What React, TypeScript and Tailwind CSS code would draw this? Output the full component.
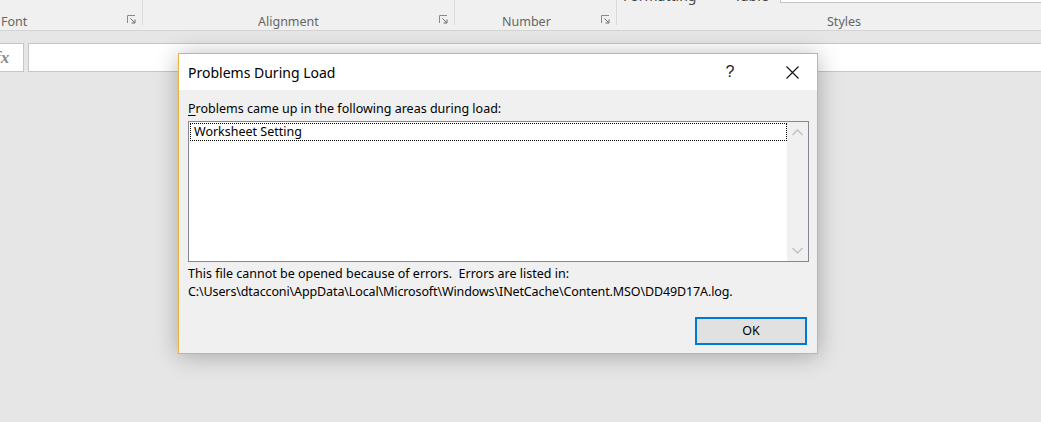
import React from "react";

function Launcher() {
  return (
    <svg width="9" height="9" viewBox="0 0 9 9" className="block">
      <path d="M0.5 8 V0.5 H8" stroke="#8a8a8a" strokeWidth="1" fill="none" />
      <path d="M3.5 3.5 L7.5 7.5" stroke="#6a6a6a" strokeWidth="1" fill="none" />
      <path d="M4.5 8 H8 V4.5" stroke="#6a6a6a" strokeWidth="1" fill="none" />
    </svg>
  );
}

function Group({
  label,
  width,
  launcher,
  labelClass,
}: {
  label: string;
  width: string;
  launcher?: boolean;
  labelClass?: string;
}) {
  return (
    <div className={`relative h-full ${width} flex shrink-0`}>
      <div className="relative flex-1 h-full">
        <div className={`absolute bottom-[2px] text-[12.5px] text-[#666] leading-none ${labelClass ?? ""}`}>{label}</div>
        {launcher && (
          <div className="absolute right-[6px] bottom-[6px]">
            <Launcher />
          </div>
        )}
      </div>
      <div className="w-px h-[25px] bg-[#dadada]" />
    </div>
  );
}

export default function App() {
  return (
    <div
      className="relative w-[1041px] h-[422px] overflow-hidden bg-[#e6e6e6] text-black"
      style={{ fontFamily: '"Noto Sans", "Open Sans", sans-serif' }}
    >
      {/* Ribbon */}
      <div className="h-[31px] bg-[#f0f0f0] border-b border-[#d4d4d4] flex">
        <Group label="Font" width="w-[143px]" launcher labelClass="left-[1px]" />
        <Group label="Alignment" width="w-[312px]" launcher labelClass="left-[115px]" />
        <Group label="Number" width="w-[162px]" launcher labelClass="left-[47px]" />
        <div className="relative flex-1 h-full">
          <div className="absolute left-[6px] top-[-11px] text-[14px] text-[#444] leading-none">Formatting</div>
          <div className="absolute left-[117px] top-[-11px] text-[14px] text-[#444] leading-none">Table</div>
          <div className="absolute left-[163px] top-0 right-0 h-[3px] border-b border-l border-[#c6c6c6] bg-white" />
          <div className="absolute bottom-[2px] left-[210px] text-[12.5px] text-[#666] leading-none">Styles</div>
        </div>
      </div>

      {/* Formula bar */}
      <div className="mt-[12px] flex h-[29px]">
        <div className="w-[24px] h-full bg-white border border-l-0 border-[#c6c6c6] flex items-center overflow-hidden">
          <span
            className="ml-[-5px] text-[17px] italic font-bold text-[#8a8a8a] leading-none"
            style={{ fontFamily: '"Liberation Serif", serif' }}
          >
            fx
          </span>
        </div>
        <div className="ml-[4px] flex-1 h-full bg-white border border-r-0 border-[#c6c6c6]" />
      </div>

      {/* Dialog */}
      <div className="absolute left-[178px] top-[53px] w-[640px] h-[301px] border border-[#e8b43e] bg-[#f0f0f0] shadow-[0_2px_22px_rgba(0,0,0,0.28)] flex flex-col">
        <div className="h-[36px] bg-white flex items-center shrink-0">
          <div className="pl-[9px] text-[14px] leading-none pt-[1px]">Problems During Load</div>
          <div className="flex-1" />
          <div
            className="w-[46px] text-center text-[16px] text-[#222] leading-none mr-[16px]"
            style={{ fontFamily: '"Liberation Sans", sans-serif' }}
          >
            ?
          </div>
          <div className="w-[46px] h-full flex items-center justify-center mr-[2px]">
            <svg width="13" height="13" viewBox="0 0 13 13">
              <path d="M0.5 0.5 L12.5 12.5 M12.5 0.5 L0.5 12.5" stroke="#111" strokeWidth="1.1" />
            </svg>
          </div>
        </div>
        <div className="flex-1 px-[9px] pt-[10px] text-[12.5px]">
          <div className="leading-[17px] h-[17px]">
            <span className="underline underline-offset-2">P</span>roblems came up in the following areas during load:
          </div>
          <div className="mt-[4px] h-[141px] w-[621px] bg-white border border-[#828790] flex">
            <div className="flex-1 pl-[1px] pt-[1px]">
              <div className="h-[18px] border border-dotted border-black pl-[3px] leading-[16px]">Worksheet Setting</div>
            </div>
            <div className="w-[21px] bg-[#f0f0f0] flex flex-col items-center justify-between py-[7px]">
              <svg width="11" height="7" viewBox="0 0 11 7">
                <path d="M0.5 6 L5.5 1 L10.5 6" stroke="#c2c2c2" strokeWidth="1.5" fill="none" />
              </svg>
              <svg width="11" height="7" viewBox="0 0 11 7">
                <path d="M0.5 1 L5.5 6 L10.5 1" stroke="#c2c2c2" strokeWidth="1.5" fill="none" />
              </svg>
            </div>
          </div>
          <div className="mt-[3px] leading-[18px]">
            <div>This file cannot be opened because of errors.&nbsp; Errors are listed in:</div>
            <div className="tracking-[-0.12px]">
              C:\Users\dtacconi\AppData\Local\Microsoft\Windows\INetCache\Content.MSO\DD49D17A.log.
            </div>
          </div>
          <div className="flex justify-end mt-[16px] pr-[1px]">
            <div className="w-[112px] h-[28px] bg-[#e1e1e1] border-2 border-[#0078d7] flex items-center justify-center text-[12.5px]">
              OK
            </div>
          </div>
        </div>
      </div>
    </div>
  );
}
